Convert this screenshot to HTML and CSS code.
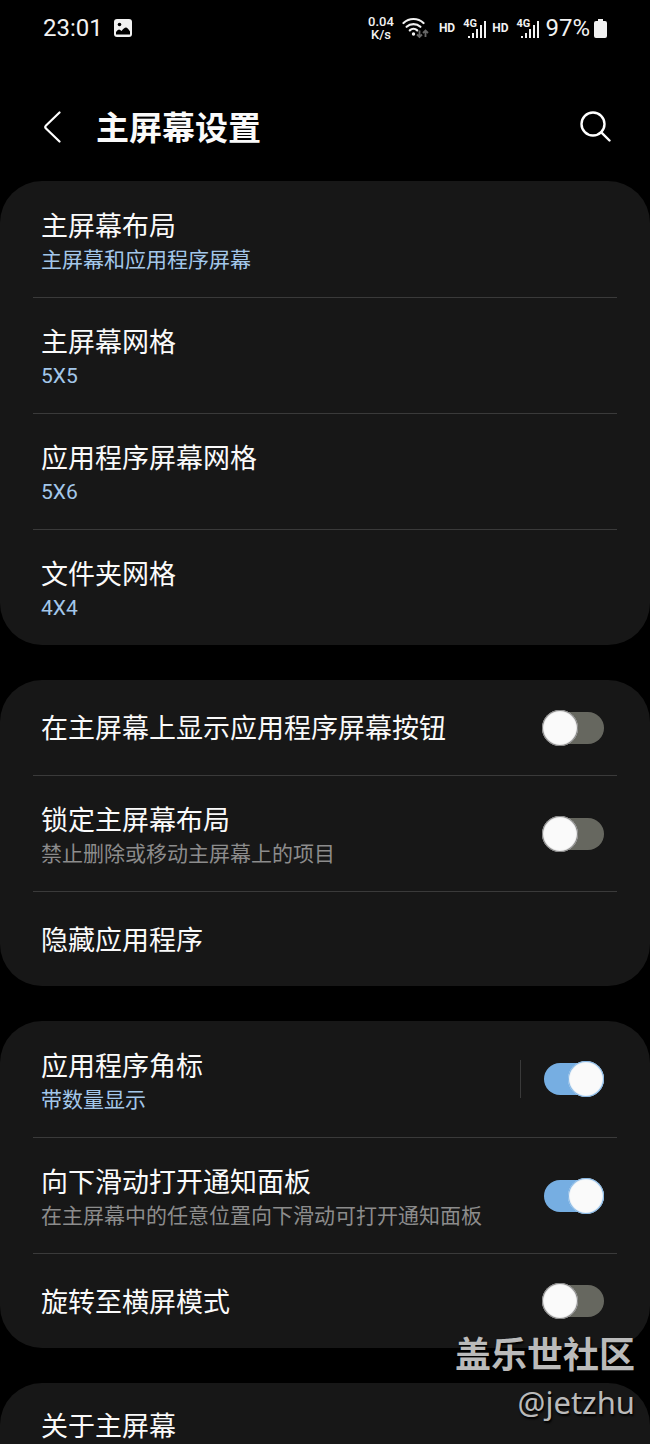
FILE: index.html
```html
<!DOCTYPE html>
<html lang="zh-CN">
<head>
    <meta charset="UTF-8">
    <meta name="viewport" content="width=device-width, initial-scale=1.0">
    <title>主屏幕设置</title>
    <link rel="stylesheet" href="styles.css">
</head>
<body>

    <div class="screen">
        <div class="status-bar">
            <div class="status-left">
                <span class="clock">23:01</span>
                <svg class="icon-image" width="18" height="18" viewBox="0 0 18 18">
                    <rect width="18" height="18" rx="3" fill="#f2f2f2"/>
                    <circle cx="5.500" cy="5.500" r="1.800" fill="#000"/>
                    <path d="M2 15.500V13q1.500-2.500 3-2.500 1.200 0 2.500 1.500Q10 8.500 12 8.500q1.500 0 4 4v3z" fill="#000"/>
                </svg>
            </div>
            <div class="status-right">
                <div class="speed">
                    <span>0.04</span>
                    <span>K/s</span>
                </div>
                <svg class="icon-wifi" width="27" height="22" viewBox="0 0 27 22">
                    <g fill="none" stroke="#f2f2f2" stroke-width="2.200" stroke-linecap="round">
                        <path d="M1.500 6a14.500 14.500 0 0 1 20 0"/>
                        <path d="M4.600 9.800a10 10 0 0 1 13.800 0"/>
                        <path d="M7.800 13.400a5.500 5.500 0 0 1 7.400 0"/>
                    </g>
                    <circle cx="11.500" cy="17" r="1.700" fill="#f2f2f2"/>
                    <g fill="none" stroke="#666" stroke-width="1.800">
                        <path d="M17.500 13.500v6.500M15 17.500l2.500 2.500 2.500-2.500"/>
                        <path d="M23.500 20v-6.500M21 16l2.500-2.500L26 16"/>
                    </g>
                </svg>
                <span class="hd">HD</span>
                <div class="signal">
                    <span>4G</span>
                    <svg width="18" height="17" viewBox="0 0 18 17" fill="#f2f2f2">
                        <rect x="0" y="15" width="2" height="2"/>
                        <rect x="4" y="12" width="2" height="5"/>
                        <rect x="8" y="8" width="2" height="9"/>
                        <rect x="12" y="4" width="2" height="13"/>
                        <rect x="16" y="0" width="2" height="17"/>
                    </svg>
                </div>
                <span class="hd">HD</span>
                <div class="signal">
                    <span>4G</span>
                    <svg width="18" height="17" viewBox="0 0 18 17" fill="#f2f2f2">
                        <rect x="0" y="15" width="2" height="2"/>
                        <rect x="4" y="12" width="2" height="5"/>
                        <rect x="8" y="8" width="2" height="9"/>
                        <rect x="12" y="4" width="2" height="13"/>
                        <rect x="16" y="0" width="2" height="17"/>
                    </svg>
                </div>
                <span class="battery-text">97%</span>
                <svg class="icon-battery" width="13" height="19" viewBox="0 0 13 19" fill="#f2f2f2">
                    <path d="M4 0h5v2h2a2 2 0 0 1 2 2v13a2 2 0 0 1-2 2H2a2 2 0 0 1-2-2V4a2 2 0 0 1 2-2h2z"/>
                </svg>
            </div>
        </div>

        <header class="header">
            <button class="icon-btn" aria-label="返回">
                <svg width="18" height="32" viewBox="0 0 18 32" fill="none" stroke="#fff" stroke-width="2.200" stroke-linecap="round" stroke-linejoin="round">
                    <path d="M16.500 1.500L3 14.500q-1.500 1.500 0 3l13.500 13"/>
                </svg>
            </button>
            <h1>主屏幕设置</h1>
            <button class="icon-btn" aria-label="搜索">
                <svg width="31" height="31" viewBox="0 0 31 31" fill="none" stroke="#fff" stroke-width="2.400" stroke-linecap="round">
                    <circle cx="13" cy="13" r="11.500"/>
                    <path d="M21.300 21.300L29.500 29.500"/>
                </svg>
            </button>
        </header>

        <main class="cards">
            <section class="card">
                <a class="row" href="#">
                    <span class="text"><span class="title">主屏幕布局</span><span class="sub value">主屏幕和应用程序屏幕</span></span>
                </a>
                <a class="row" href="#">
                    <span class="text"><span class="title">主屏幕网格</span><span class="sub value">5X5</span></span>
                </a>
                <a class="row" href="#">
                    <span class="text"><span class="title">应用程序屏幕网格</span><span class="sub value">5X6</span></span>
                </a>
                <a class="row" href="#">
                    <span class="text"><span class="title">文件夹网格</span><span class="sub value">4X4</span></span>
                </a>
            </section>

            <section class="card">
                <label class="row single">
                    <span class="text"><span class="title">在主屏幕上显示应用程序屏幕按钮</span></span>
                    <input class="switch" type="checkbox">
                </label>
                <label class="row">
                    <span class="text"><span class="title">锁定主屏幕布局</span><span class="sub">禁止删除或移动主屏幕上的项目</span></span>
                    <input class="switch" type="checkbox">
                </label>
                <a class="row single" href="#">
                    <span class="text"><span class="title">隐藏应用程序</span></span>
                </a>
            </section>

            <section class="card">
                <label class="row">
                    <span class="text"><span class="title">应用程序角标</span><span class="sub value">带数量显示</span></span>
                    <span class="separator"></span>
                    <input class="switch" type="checkbox" checked>
                </label>
                <label class="row">
                    <span class="text"><span class="title">向下滑动打开通知面板</span><span class="sub">在主屏幕中的任意位置向下滑动可打开通知面板</span></span>
                    <input class="switch" type="checkbox" checked>
                </label>
                <label class="row single">
                    <span class="text"><span class="title">旋转至横屏模式</span></span>
                    <input class="switch" type="checkbox">
                </label>
            </section>

            <section class="card">
                <a class="row top" href="#">
                    <span class="text"><span class="title">关于主屏幕</span></span>
                </a>
            </section>
        </main>

        <div class="watermark">
            <strong>盖乐世社区</strong>
            <span>@jetzhu</span>
        </div>
    </div>

</body>
</html>
```
FILE: styles.css
```css
* {
    margin: 0;
    padding: 0;
    box-sizing: border-box;
}

body {
    background-color: #000;
    color: #fafafa;
    font-family: Roboto, "Noto Sans CJK SC", sans-serif;
}

.screen {
    position: relative;
    height: 100vh;
    overflow: hidden;
}

/* status bar */
.status-bar {
    display: flex;
    justify-content: space-between;
    height: 56px;
    padding: 0 43px;
    color: #f2f2f2;
}

.status-left,
.status-right {
    display: flex;
    align-items: center;
}

.status-left {
    gap: 11px;
}

.clock,
.battery-text {
    font-size: 24px;
    line-height: 28px;
}

.speed {
    display: flex;
    flex-direction: column;
    align-items: center;
    font-size: 13px;
    font-weight: 500;
    line-height: 13px;
}

.icon-wifi {
    margin: 0 10px 0 8px;
}

.hd {
    font-size: 12px;
    font-weight: 700;
}

.signal {
    display: grid;
    width: 23px;
    margin: 0 6px 0 8px;
}

.signal span,
.signal svg {
    grid-area: 1 / 1;
}

.signal span {
    font-size: 11px;
    font-weight: 700;
    line-height: 12px;
}

.signal svg {
    justify-self: end;
    margin-top: 3px;
}

.icon-battery {
    margin-left: 4px;
}

/* header */
.header {
    display: flex;
    align-items: center;
    height: 125px;
    padding: 16px 39px 0 43px;
}

.header h1 {
    flex: 1;
    margin-left: 35px;
    padding-top: 4px;
    font-size: 33px;
    font-weight: 700;
    line-height: 48px;
}

.icon-btn {
    display: flex;
    border: none;
    background: none;
    color: inherit;
    cursor: pointer;
}

/* setting cards */
.cards {
    display: flex;
    flex-direction: column;
    gap: 35px;
}

.card {
    padding: 0 33px;
    border-radius: 42px;
    background-color: #171717;
}

.row {
    display: flex;
    align-items: center;
    min-height: 116px;
    padding: 0 13px 0 8px;
    color: inherit;
    text-decoration: none;
}

.row + .row {
    border-top: 1px solid #3a3a3a;
}

.row.single {
    min-height: 95px;
}

.row.top {
    align-items: flex-start;
    padding-top: 22px;
}

.text {
    flex: 1;
    display: flex;
    flex-direction: column;
    padding-top: 3px;
}

.title {
    font-size: 27px;
    line-height: 38px;
}

.sub {
    font-size: 21px;
    line-height: 28px;
    color: #8c8c8c;
}

.sub.value {
    color: #a3c7ea;
}

.separator {
    width: 1px;
    height: 38px;
    margin-right: 21px;
    background-color: #3a3a3a;
}

/* switch */
.switch {
    appearance: none;
    display: grid;
    align-items: center;
    width: 62px;
    height: 36px;
    cursor: pointer;
}

.switch::before,
.switch::after {
    content: "";
    grid-area: 1 / 1;
}

.switch::before {
    justify-self: end;
    width: 58px;
    height: 32px;
    border-radius: 16px;
    background-color: #66675f;
}

.switch::after {
    justify-self: start;
    width: 36px;
    height: 36px;
    border-radius: 50%;
    background-color: #fafafa;
    box-shadow: 0 0 1px 1px #777 inset;
}

.switch:checked::before {
    width: 60px;
    background-color: #76aee2;
}

.switch:checked::after {
    justify-self: end;
    box-shadow: 0 0 1px 1px #76aee2 inset;
}

/* watermark over the page */
.watermark {
    position: absolute;
    right: 15px;
    bottom: 20px;
    display: flex;
    flex-direction: column;
    align-items: flex-end;
    color: #bababa;
    text-shadow: 1px 2px 2px #000;
    pointer-events: none;
}

.watermark strong {
    font-size: 36px;
    line-height: 48px;
}

.watermark span {
    font-family: "Noto Sans", sans-serif;
    font-size: 31px;
    line-height: 44px;
}
```
